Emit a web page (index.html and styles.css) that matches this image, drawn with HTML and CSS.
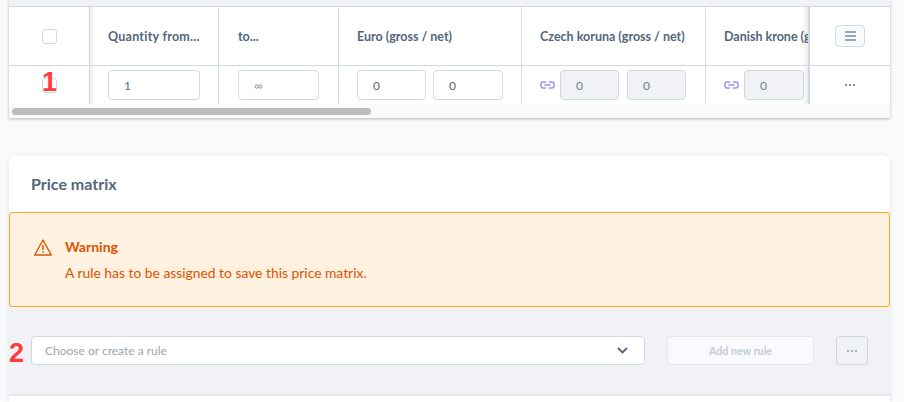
FILE: index.html
```html
<!DOCTYPE html>
<html lang="en">
<head>
<meta charset="utf-8">
<title>Price matrix</title>
<link rel="stylesheet" href="styles.css">
</head>
<body>
<section class="grid-card">
  <div class="strip"></div>
  <div class="row head">
    <div class="cell c-check"><span class="checkbox"></span></div>
    <div class="cell c-qty"><span class="th th-wide">Quantity from...</span></div>
    <div class="cell c-to"><span class="th">to...</span></div>
    <div class="cell c-euro"><span class="th">Euro (gross / net)</span></div>
    <div class="cell c-czk"><span class="th">Czech koruna (gross / net)</span></div>
    <div class="cell c-dkk"><span class="th">Danish krone (gross / net)</span></div>
    <div class="cell c-act">
      <button class="menu-btn" aria-label="Columns">
        <svg width="11" height="10" viewBox="0 0 11 10"><path d="M0 1h11M0 5h11M0 9h11" stroke="#758ca3" stroke-width="1.6" fill="none"/></svg>
      </button>
    </div>
  </div>
  <div class="row body">
    <div class="cell c-check"><span class="checkbox"></span><span class="marker marker-1">1</span></div>
    <div class="cell c-qty"><span class="input w-92">1</span></div>
    <div class="cell c-to"><span class="input w-81 ph">∞</span></div>
    <div class="cell c-euro"><span class="input w-69">0</span><span class="input w-70">0</span></div>
    <div class="cell c-czk">
      <svg class="link" width="15" height="8" viewBox="0 0 15 8"><path d="M6.2 .9H3.2a2.3 2.3 0 0 0 -2.3 2.3v1.6a2.3 2.3 0 0 0 2.3 2.3h3M8.8 .9h3a2.3 2.3 0 0 1 2.3 2.3v1.6a2.3 2.3 0 0 1 -2.3 2.3h-3M4.2 4h6.6" stroke="#a08ef5" stroke-width="1.5" fill="none"/></svg>
      <span class="input w-59 off">0</span><span class="input w-59 off">0</span>
    </div>
    <div class="cell c-dkk">
      <svg class="link" width="15" height="8" viewBox="0 0 15 8"><path d="M6.2 .9H3.2a2.3 2.3 0 0 0 -2.3 2.3v1.6a2.3 2.3 0 0 0 2.3 2.3h3M8.8 .9h3a2.3 2.3 0 0 1 2.3 2.3v1.6a2.3 2.3 0 0 1 -2.3 2.3h-3M4.2 4h6.6" stroke="#a08ef5" stroke-width="1.5" fill="none"/></svg>
      <span class="input w-60 off">0</span>
    </div>
    <div class="cell c-act"><span class="dots">
      <i></i><i></i><i></i>
    </span></div>
  </div>
  <div class="scrollbar"><div class="thumb"></div></div>
</section>

<section class="matrix-card">
  <h2 class="title">Price matrix</h2>
  <div class="alert">
    <svg class="alert-icon" width="18" height="17" viewBox="0 0 18 17"><path d="M9 1 17.3 16H.7Z" fill="none" stroke="#de5300" stroke-width="1.4" stroke-linejoin="round"/><path d="M9 6v5M9 12.2v1.6" stroke="#de5300" stroke-width="1.4" fill="none"/></svg>
    <div class="alert-text">
      <div class="alert-title">Warning</div>
      <div class="alert-msg">A rule has to be assigned to save this price matrix.</div>
    </div>
  </div>
  <div class="rule-bar">
    <span class="marker marker-2">2</span>
    <div class="select">
      <span>Choose or create a rule</span>
      <svg width="11" height="7" viewBox="0 0 11 7"><path d="M1 1l4.5 4.5L10 1" stroke="#52667a" stroke-width="1.8" fill="none"/></svg>
    </div>
    <button class="add-btn" disabled>Add new rule</button>
    <button class="more-btn" aria-label="More"><span class="dots dots-light"><i></i><i></i><i></i></span></button>
  </div>
  <div class="next"></div>
</section>
</body>
</html>
```
FILE: styles.css
```css
* { box-sizing: border-box; }
html, body { margin: 0; height: 402px; overflow: hidden; }
body {
  background: #f9fafb;
  padding: 0 14px 0 9px;
  font-family: "Lato", "Noto Sans", sans-serif;
  color: #52667a;
}
.grid-card {
  height: 118px;
  background: #fafafa;
  box-shadow: 0 1px 3px rgba(0, 10, 30, .28);
  position: relative;
}
.strip { height: 7px; background: #f0f2f5; border-bottom: 1px solid #d1d9e0; }
.row { display: flex; background: #fff; }
.head { height: 59px; border-bottom: 1px solid #d1d9e0; }
.body { height: 38px; }
.cell {
  display: flex;
  align-items: center;
  border-right: 1px solid #d1d9e0;
  padding-left: 18px;
  flex: none;
  overflow: hidden;
  white-space: nowrap;
}
.c-check { width: 81px; padding: 0; justify-content: center; position: relative; overflow: visible; }
.c-qty { width: 129px; background: linear-gradient(90deg, #ececec, #fff 5px); }
.c-to { width: 120px; padding-left: 19px; }
.c-euro { width: 183px; gap: 7px; }
.c-czk { width: 184px; gap: 5px; }
.c-czk .off + .off { margin-left: 3px; }
.c-dkk { width: 104px; background: linear-gradient(270deg, #ececec, #fff 6px); border-right: 2px solid #d1d9e0; padding-right: 0; gap: 5px; }
.c-act { width: 80px; padding: 0; justify-content: center; border-right: 0; }
.th { font-size: 12.5px; font-weight: 700; }
.th-wide { letter-spacing: .02em; }
.checkbox {
  width: 15px; height: 15px;
  border: 1px solid #d1d9e0;
  border-radius: 3px;
  background: #fff;
}
.input {
  display: flex;
  align-items: center;
  height: 30px;
  flex: none;
  padding-left: 15px;
  font-size: 12px;
  border: 1px solid #d1d9e0;
  border-radius: 4px;
  background: #fff;
  color: #52667a;
}
.ph { color: #8a9bad; }
.off { background: #f0f2f5; color: #6d7f92; }
.w-92 { width: 92px; }
.w-81 { width: 81px; }
.w-69 { width: 69px; }
.w-70 { width: 70px; }
.w-60 { width: 60px; }
.w-59 { width: 59px; }
.link { flex: none; }
.menu-btn {
  width: 30px; height: 22px;
  padding: 0;
  display: flex; align-items: center; justify-content: center;
  background: #f9fafb;
  border: 1px solid #d1d9e0;
  border-radius: 4px;
}
.dots { display: flex; gap: 2px; }
.dots i { width: 2px; height: 2px; border-radius: 50%; background: #52667a; }
.dots-light i { background: #8c9cad; }
.scrollbar { height: 14px; padding: 4px 3px 0; }
.thumb { width: 359px; height: 7px; border-radius: 4px; background: #bdbdbd; }
.marker {
  position: absolute;
  font-family: "Liberation Sans", sans-serif;
  font-weight: 700;
  color: #ff3b3b;
  line-height: 1;
  font-size: 27px;
}
.marker-1 { left: 33px; top: 3px; }
.marker-2 { left: 0; top: 33px; }
.matrix-card {
  margin-top: 37px;
  background: #f0f2f5;
  border-radius: 8px 8px 0 0;
  box-shadow: 0 1px 4px rgba(0, 10, 30, .1);
  height: 247px;
  overflow: hidden;
}
.title {
  margin: 0;
  height: 57px;
  padding: 0 0 0 22px;
  display: flex; align-items: center;
  background: #fff;
  font-size: 16px;
  font-weight: 700;
  color: #52667a;
}
.alert {
  height: 95px;
  display: flex;
  padding: 24px 0 0 24px;
  gap: 13px;
  background: #fff1df;
  border: 1px solid #ffab22;
  border-radius: 3px;
  color: #de5300;
}
.alert-icon { flex: none; margin-top: 2px; }
.alert-title { font-size: 14px; font-weight: 700; line-height: 20px; }
.alert-msg { font-size: 13.85px; line-height: 20px; margin-top: 6px; }
.rule-bar {
  position: relative;
  height: 89px;
  padding: 29px 22px 0 22px;
  display: flex;
  gap: 22px;
  align-items: flex-start;
  border-bottom: 2px solid #e3e6ea;
}
.select {
  flex: none;
  width: 614px; height: 29px;
  padding: 0 16px 0 13px;
  display: flex; align-items: center; justify-content: space-between;
  background: #fff;
  border: 1px solid #d1d9e0;
  border-radius: 4px;
  font-size: 12px;
  color: #9aa8b5;
}
.add-btn {
  flex: none;
  width: 147px; height: 29px;
  padding: 0;
  font: 700 10.7px "Lato", sans-serif;
  color: #c4ccd6;
  background: #f9fafb;
  border: 1px solid #e3e7ec;
  border-radius: 4px;
}
.more-btn {
  flex: none;
  width: 32px; height: 29px;
  padding: 0;
  display: flex; align-items: center; justify-content: center;
  background: #f0f2f5;
  border: 1px solid #d1d9e0;
  border-radius: 3px;
}
.next { height: 30px; background: #fff; }
```
